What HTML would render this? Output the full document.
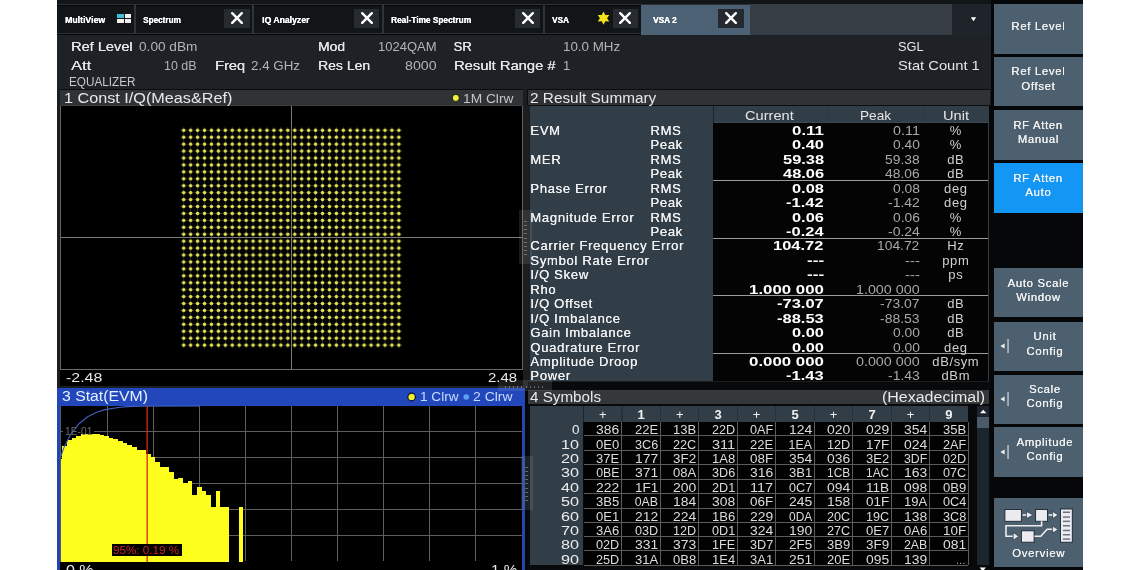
<!DOCTYPE html>
<html><head><meta charset="utf-8"><style>
html,body{margin:0;padding:0;width:1140px;height:570px;overflow:hidden;background:#fff;position:relative}
div,span,svg{position:absolute;box-sizing:border-box}
span{font-family:"Liberation Sans", sans-serif;white-space:pre;transform-origin:0 0}
</style></head><body>
<div style="left:57px;top:0px;width:1026px;height:570px;background:#060708;"></div>
<div style="left:57px;top:0px;width:934px;height:4px;background:#131619;"></div>
<div style="left:57px;top:4.3px;width:934px;height:1.2px;background:#2b3137;"></div>
<div style="left:57px;top:5.5px;width:934px;height:27.7px;background:#121518;"></div>
<div style="left:57px;top:33.2px;width:934px;height:1.2px;background:#2b3137;"></div>
<div style="left:134px;top:5px;width:1.6px;height:28.5px;background:#2e343a;"></div>
<div style="left:252px;top:5px;width:1.6px;height:28.5px;background:#2e343a;"></div>
<div style="left:382px;top:5px;width:1.6px;height:28.5px;background:#2e343a;"></div>
<div style="left:543px;top:5px;width:1.6px;height:28.5px;background:#2e343a;"></div>
<div style="left:641px;top:4.5px;width:109px;height:30.0px;background:#4c6173;"></div>
<div style="left:750px;top:4px;width:202px;height:31px;background:#363d44;"></div>
<div style="left:952px;top:4px;width:39px;height:31px;background:#1f242a;"></div>
<div style="left:991px;top:0px;width:3px;height:570px;background:#050607;"></div>
<div style="left:224px;top:8.5px;width:26px;height:19.5px;background:#262b30;"></div>
<svg style="left:231.0px;top:12.3px" width="12" height="12"><path d="M1.2 1.2L10.8 10.8M10.8 1.2L1.2 10.8" stroke="#fff" stroke-width="2.4" stroke-linecap="round"/></svg>
<div style="left:354px;top:8.5px;width:25px;height:19.5px;background:#262b30;"></div>
<svg style="left:360.5px;top:12.3px" width="12" height="12"><path d="M1.2 1.2L10.8 10.8M10.8 1.2L1.2 10.8" stroke="#fff" stroke-width="2.4" stroke-linecap="round"/></svg>
<div style="left:515px;top:8.5px;width:25px;height:19.5px;background:#262b30;"></div>
<svg style="left:521.5px;top:12.3px" width="12" height="12"><path d="M1.2 1.2L10.8 10.8M10.8 1.2L1.2 10.8" stroke="#fff" stroke-width="2.4" stroke-linecap="round"/></svg>
<div style="left:612.5px;top:8.5px;width:25.5px;height:19.5px;background:#262b30;"></div>
<svg style="left:619.25px;top:12.3px" width="12" height="12"><path d="M1.2 1.2L10.8 10.8M10.8 1.2L1.2 10.8" stroke="#fff" stroke-width="2.4" stroke-linecap="round"/></svg>
<div style="left:718px;top:8.5px;width:26px;height:19.5px;background:#242a30;"></div>
<svg style="left:725.0px;top:12.3px" width="12" height="12"><path d="M1.2 1.2L10.8 10.8M10.8 1.2L1.2 10.8" stroke="#fff" stroke-width="2.4" stroke-linecap="round"/></svg>
<div style="left:117px;top:13.5px;width:6.6px;height:4.7px;background:#3cc0d4;"></div>
<div style="left:124.6px;top:13.5px;width:6.7px;height:4.7px;background:#f0f0f0;"></div>
<div style="left:117px;top:19.2px;width:6.6px;height:4.0px;background:#f4f0f0;"></div>
<div style="left:124.6px;top:19.2px;width:6.7px;height:4.0px;background:#eef0ee;"></div>
<svg style="left:590px;top:4px" width="30" height="30"><polygon points="13.50,7.60 15.30,11.08 19.22,10.90 17.10,14.20 19.22,17.50 15.30,17.32 13.50,20.80 11.70,17.32 7.78,17.50 9.90,14.20 7.78,10.90 11.70,11.08" fill="#f2e21a"/></svg>
<svg style="left:968.9px;top:15px" width="10" height="8"><path d="M1.8 2.2L7.2 2.2L4.5 6.2Z" fill="#fff"/></svg>
<div style="left:57px;top:34.5px;width:934px;height:54.5px;background:#1e2227;"></div>
<div style="left:57px;top:89px;width:470.5px;height:299px;background:#1b1e21;"></div>
<div style="left:60px;top:90px;width:462.6px;height:16.3px;background:#303336;"></div>
<div style="left:59.5px;top:89px;width:463.1px;height:1px;background:#0b0c0d;"></div>
<div style="left:60px;top:105.3px;width:462.6px;height:1.0px;background:#3a3d40;"></div>
<div style="left:60px;top:106px;width:462.5px;height:280px;background:#000;"></div>
<div style="left:60px;top:106.3px;width:1px;height:263.7px;background:#606060;"></div>
<div style="left:522px;top:106.3px;width:1px;height:263.7px;background:#606060;"></div>
<div style="left:60px;top:369px;width:463px;height:1px;background:#6a6a6a;"></div>
<div style="left:291px;top:106.3px;width:1px;height:262.7px;background:#7a7a7a;"></div>
<div style="left:61px;top:237px;width:461px;height:1px;background:#7a7a7a;"></div>
<svg style="left:450px;top:92px" width="12" height="12"><circle cx="5.8" cy="5.9" r="3.6" fill="#f0f040" stroke="#111" stroke-width="1"/></svg>
<div style="left:527.5px;top:89px;width:463.5px;height:299px;background:#1b1e21;"></div>
<div style="left:988.6px;top:104.5px;width:5.4px;height:283.5px;background:#060708;"></div>
<div style="left:527.5px;top:104.5px;width:461.1px;height:1.8px;background:#0c0e10;"></div>
<div style="left:527.8px;top:90px;width:462.2px;height:14.5px;background:#303336;"></div>
<div style="left:527.3px;top:89px;width:462.7px;height:1px;background:#0b0c0d;"></div>
<div style="left:527.3px;top:89px;width:0.9px;height:15.5px;background:#0b0c0d;"></div>
<div style="left:529.5px;top:106.3px;width:459.1px;height:275.2px;background:#313e48;"></div>
<div style="left:712.6px;top:122.4px;width:275.9px;height:259.1px;background:#040404;"></div>
<svg style="left:0;top:0" width="1140" height="570"><defs><pattern id="cst" patternUnits="userSpaceOnUse" x="180.230" y="126.835" width="6.94" height="6.93"><path d="M0.47 3.46H6.47M3.47 0.46V6.46" stroke="#4a4a30" stroke-width="0.8"/><circle cx="3.470" cy="3.465" r="1.75" fill="#e4e454"/></pattern></defs><rect x="180.230" y="126.835" width="222.080" height="221.760" fill="url(#cst)"/></svg>
<div style="left:712.5px;top:106.3px;width:276.0px;height:16.3px;background:#313e48;"></div>
<div style="left:712.5px;top:106.3px;width:1.0px;height:16.3px;background:#1c242a;"></div>
<div style="left:713.5px;top:121.6px;width:275.0px;height:1.0px;background:#3c4955;"></div>
<div style="left:827.2px;top:106.6px;width:1.2px;height:15.8px;background:#2c3740;"></div>
<div style="left:923.2px;top:106.6px;width:1.2px;height:15.8px;background:#2c3740;"></div>
<div style="left:712.6px;top:180px;width:275.4px;height:1px;background:#9a9a9a;"></div>
<div style="left:712.6px;top:238px;width:275.4px;height:1px;background:#9a9a9a;"></div>
<div style="left:712.6px;top:295px;width:275.4px;height:1px;background:#9a9a9a;"></div>
<div style="left:712.6px;top:353px;width:275.4px;height:1px;background:#9a9a9a;"></div>
<div style="left:57px;top:388px;width:468px;height:182px;background:#2445ae;"></div>
<div style="left:525px;top:388px;width:2.7px;height:182px;background:#050607;"></div>
<div style="left:57px;top:388px;width:467.3px;height:17.7px;background:#2147ba;"></div>
<div style="left:60.3px;top:405.7px;width:461.6px;height:164.3px;background:#000;"></div>
<div style="left:60px;top:405.7px;width:1px;height:156.3px;background:#505a70;"></div>
<div style="left:107px;top:405.7px;width:1px;height:155.3px;background:#5e5e5e;"></div>
<div style="left:153px;top:405.7px;width:1px;height:155.3px;background:#5e5e5e;"></div>
<div style="left:199px;top:405.7px;width:1px;height:155.3px;background:#5e5e5e;"></div>
<div style="left:245px;top:405.7px;width:1px;height:155.3px;background:#5e5e5e;"></div>
<div style="left:291px;top:405.7px;width:1px;height:155.3px;background:#5e5e5e;"></div>
<div style="left:337px;top:405.7px;width:1px;height:155.3px;background:#5e5e5e;"></div>
<div style="left:383px;top:405.7px;width:1px;height:155.3px;background:#5e5e5e;"></div>
<div style="left:429px;top:405.7px;width:1px;height:155.3px;background:#5e5e5e;"></div>
<div style="left:475px;top:405.7px;width:1px;height:155.3px;background:#5e5e5e;"></div>
<div style="left:61px;top:431px;width:460.9px;height:1px;background:#5e5e5e;"></div>
<div style="left:61px;top:457px;width:460.9px;height:1px;background:#5e5e5e;"></div>
<div style="left:61px;top:483px;width:460.9px;height:1px;background:#5e5e5e;"></div>
<div style="left:61px;top:509px;width:460.9px;height:1px;background:#5e5e5e;"></div>
<div style="left:61px;top:535px;width:460.9px;height:1px;background:#5e5e5e;"></div>
<svg style="left:400px;top:390px" width="20" height="16"><circle cx="11.6" cy="7" r="3.8" fill="#f0f030" stroke="#0a1030" stroke-width="1.2"/></svg>
<svg style="left:460px;top:390px" width="12" height="16"><circle cx="6.2" cy="7" r="2.8" fill="#5aa2f0"/></svg>
<div style="left:63px;top:427px;width:31px;height:9px;background:#000;"></div>
<svg style="left:0;top:0" width="1140" height="570" shape-rendering="crispEdges"><g fill="#ffff1e"><rect x="61" y="459" width="1" height="103"/><rect x="62" y="446" width="5" height="116"/><rect x="67" y="440" width="5" height="122"/><rect x="72" y="438" width="4" height="124"/><rect x="76" y="436" width="5" height="126"/><rect x="81" y="434" width="5" height="128"/><rect x="86" y="434" width="4" height="128"/><rect x="90" y="434" width="5" height="128"/><rect x="95" y="434" width="5" height="128"/><rect x="100" y="435" width="4" height="127"/><rect x="104" y="436" width="5" height="126"/><rect x="109" y="438" width="4" height="124"/><rect x="113" y="439" width="5" height="123"/><rect x="118" y="441" width="5" height="121"/><rect x="123" y="443" width="4" height="119"/><rect x="127" y="445" width="5" height="117"/><rect x="132" y="447" width="5" height="115"/><rect x="137" y="450" width="4" height="112"/><rect x="141" y="450" width="5" height="112"/><rect x="146" y="454" width="5" height="108"/><rect x="151" y="457" width="4" height="105"/><rect x="155" y="462" width="5" height="100"/><rect x="160" y="467" width="4" height="95"/><rect x="164" y="467" width="5" height="95"/><rect x="169" y="472" width="5" height="90"/><rect x="174" y="479" width="4" height="83"/><rect x="178" y="478" width="5" height="84"/><rect x="183" y="483" width="5" height="79"/><rect x="188" y="481" width="4" height="81"/><rect x="192" y="495" width="5" height="67"/><rect x="197" y="487" width="5" height="75"/><rect x="202" y="491" width="4" height="71"/><rect x="206" y="495" width="5" height="67"/><rect x="211" y="507" width="5" height="55"/><rect x="216" y="491" width="4" height="71"/><rect x="220" y="507" width="5" height="55"/><rect x="225" y="507" width="4" height="55"/><rect x="239" y="507" width="4" height="55"/></g></svg>
<svg style="left:0;top:0" width="1140" height="570"><polyline points="61,456 64,447.4 70.2,435.1 79,423.7 87.7,416.7 96.5,412.3 105.2,409.6 118.4,407.5 127.2,406.6 140,406.2 200,405.9" fill="none" stroke="#4060c0" stroke-width="1.1" stroke-linejoin="round"/><rect x="146.5" y="405.7" width="1.3" height="156.3" fill="#d42a10"/></svg>
<div style="left:112px;top:543.7px;width:70px;height:12.3px;background:#000;"></div>
<div style="left:527.5px;top:381.5px;width:463.5px;height:188.5px;background:#08090a;"></div>
<div style="left:527.7px;top:389.5px;width:461.3px;height:14.3px;background:#35383b;"></div>
<div style="left:530.2px;top:405.5px;width:53.3px;height:159.5px;background:#313e48;"></div>
<div style="left:583.5px;top:405.5px;width:384.7px;height:16.1px;background:#313e48;"></div>
<div style="left:582.8px;top:405.5px;width:1.0px;height:16.1px;background:#1c242a;"></div>
<div style="left:583.5px;top:421.5px;width:384.7px;height:143.5px;background:#020202;"></div>
<div style="left:621.37px;top:405.9px;width:1.2px;height:15.6px;background:#283038;"></div>
<div style="left:659.84px;top:405.9px;width:1.2px;height:15.6px;background:#283038;"></div>
<div style="left:698.31px;top:405.9px;width:1.2px;height:15.6px;background:#283038;"></div>
<div style="left:736.78px;top:405.9px;width:1.2px;height:15.6px;background:#283038;"></div>
<div style="left:775.25px;top:405.9px;width:1.2px;height:15.6px;background:#283038;"></div>
<div style="left:813.7199999999999px;top:405.9px;width:1.2px;height:15.6px;background:#283038;"></div>
<div style="left:852.1899999999999px;top:405.9px;width:1.2px;height:15.6px;background:#283038;"></div>
<div style="left:890.66px;top:405.9px;width:1.2px;height:15.6px;background:#283038;"></div>
<div style="left:929.13px;top:405.9px;width:1.2px;height:15.6px;background:#283038;"></div>
<div style="left:583.5px;top:435px;width:384.7px;height:1px;background:#5c5c5c;"></div>
<div style="left:583.5px;top:450px;width:384.7px;height:1px;background:#5c5c5c;"></div>
<div style="left:583.5px;top:464px;width:384.7px;height:1px;background:#5c5c5c;"></div>
<div style="left:583.5px;top:479px;width:384.7px;height:1px;background:#5c5c5c;"></div>
<div style="left:583.5px;top:493px;width:384.7px;height:1px;background:#5c5c5c;"></div>
<div style="left:583.5px;top:508px;width:384.7px;height:1px;background:#5c5c5c;"></div>
<div style="left:583.5px;top:522px;width:384.7px;height:1px;background:#5c5c5c;"></div>
<div style="left:583.5px;top:536px;width:384.7px;height:1px;background:#5c5c5c;"></div>
<div style="left:583.5px;top:550px;width:384.7px;height:1px;background:#5c5c5c;"></div>
<div style="left:583.5px;top:565px;width:384.7px;height:1px;background:#5c5c5c;"></div>
<div style="left:621px;top:421.5px;width:1px;height:143.5px;background:#5c5c5c;"></div>
<div style="left:660px;top:421.5px;width:1px;height:143.5px;background:#5c5c5c;"></div>
<div style="left:698px;top:421.5px;width:1px;height:143.5px;background:#5c5c5c;"></div>
<div style="left:737px;top:421.5px;width:1px;height:143.5px;background:#5c5c5c;"></div>
<div style="left:775px;top:421.5px;width:1px;height:143.5px;background:#5c5c5c;"></div>
<div style="left:814px;top:421.5px;width:1px;height:143.5px;background:#5c5c5c;"></div>
<div style="left:852px;top:421.5px;width:1px;height:143.5px;background:#5c5c5c;"></div>
<div style="left:891px;top:421.5px;width:1px;height:143.5px;background:#5c5c5c;"></div>
<div style="left:929px;top:421.5px;width:1px;height:143.5px;background:#5c5c5c;"></div>
<div style="left:968px;top:421.5px;width:1px;height:143.5px;background:#5c5c5c;"></div>
<div style="left:977.2px;top:405.5px;width:11.6px;height:159.5px;background:#1c252d;"></div>
<div style="left:977.2px;top:416.5px;width:11.6px;height:11.2px;background:#4a5a68;"></div>
<svg style="left:977px;top:407px" width="12" height="8"><path d="M3 6.2L9.4 6.2L6.2 2.8Z" fill="#fff"/></svg>
<svg style="left:977px;top:564.5px" width="12" height="8"><path d="M2.5 2.5L9 2.5L5.75 6Z" fill="#fff"/></svg>
<div style="left:994px;top:4px;width:89px;height:49.5px;background:#4d6070;"></div>
<div style="left:994px;top:57px;width:89px;height:49px;background:#4d6070;"></div>
<div style="left:994px;top:109.6px;width:89px;height:50.4px;background:#4d6070;"></div>
<div style="left:994px;top:163px;width:89px;height:49.5px;background:#1496f4;"></div>
<div style="left:994px;top:268.4px;width:89px;height:49.1px;background:#4d6070;"></div>
<div style="left:994px;top:321.7px;width:89px;height:49.1px;background:#4d6070;"></div>
<svg style="left:998px;top:339.2px" width="14" height="14"><path d="M2.4 7L6.6 4.4V9.6Z" fill="#f0f0f0"/><rect x="9.4" y="0" width="1.3" height="14" fill="#c8d0d8"/></svg>
<div style="left:994px;top:374.5px;width:89px;height:49.1px;background:#4d6070;"></div>
<svg style="left:998px;top:392.1px" width="14" height="14"><path d="M2.4 7L6.6 4.4V9.6Z" fill="#f0f0f0"/><rect x="9.4" y="0" width="1.3" height="14" fill="#c8d0d8"/></svg>
<div style="left:994px;top:427.4px;width:89px;height:49.2px;background:#4d6070;"></div>
<svg style="left:998px;top:445.0px" width="14" height="14"><path d="M2.4 7L6.6 4.4V9.6Z" fill="#f0f0f0"/><rect x="9.4" y="0" width="1.3" height="14" fill="#c8d0d8"/></svg>
<div style="left:994px;top:497.6px;width:89px;height:69.4px;background:#4d6070;"></div>
<svg style="left:994px;top:497px" width="89" height="70"><g fill="#ececf0" stroke="#1a2430" stroke-width="0.9"><rect x="10.9" y="12.5" width="16.5" height="11.8"/><rect x="41.6" y="12.5" width="11.9" height="11.8"/><rect x="27.4" y="33.8" width="12.7" height="11.4"/><rect x="66.5" y="12" width="11.8" height="33.2"/></g><g fill="none" stroke="#ececf0" stroke-width="1.6"><path d="M28.6 18H33"/><path d="M54.7 18H59"/><path d="M47.6 24.3V28.7H12V39.3H19.5"/><path d="M40.5 39.3H46.8L53.1 32.2H58.6"/></g><g fill="#ececf0" stroke="#1a2430" stroke-width="0.6"><path d="M32.6 14.4L38.9 18L32.6 21.6Z"/><path d="M58.6 14.4L64.1 18L58.6 21.6Z"/><path d="M19.2 35.4L24.7 39.3L19.2 43.3Z"/><path d="M58.6 29L64.1 32.6L58.6 36.1Z"/></g><g fill="#6a7480"><rect x="68.9" y="14.5" width="7.1" height="1.5"/><rect x="68.9" y="19.3" width="7.1" height="1.5"/><rect x="68.9" y="23.6" width="7.1" height="1.5"/><rect x="68.9" y="28.0" width="7.1" height="1.5"/><rect x="68.9" y="32.7" width="7.1" height="1.5"/><rect x="68.9" y="37.0" width="7.1" height="1.5"/><rect x="68.9" y="41.3" width="7.1" height="1.5"/></g></svg>
<div style="left:519.3px;top:209.9px;width:13.1px;height:54.6px;background:rgba(200,200,200,0.13);"></div>
<div style="left:524.3499999999999px;top:220.9px;width:3.0px;height:1.0px;background:rgba(190,190,190,0.45);"></div>
<div style="left:524.3499999999999px;top:225.05px;width:3.0px;height:1.0px;background:rgba(190,190,190,0.45);"></div>
<div style="left:524.3499999999999px;top:229.20000000000002px;width:3.0px;height:1.0px;background:rgba(190,190,190,0.45);"></div>
<div style="left:524.3499999999999px;top:233.35000000000002px;width:3.0px;height:1.0px;background:rgba(190,190,190,0.45);"></div>
<div style="left:524.3499999999999px;top:237.50000000000003px;width:3.0px;height:1.0px;background:rgba(190,190,190,0.45);"></div>
<div style="left:524.3499999999999px;top:241.65000000000003px;width:3.0px;height:1.0px;background:rgba(190,190,190,0.45);"></div>
<div style="left:524.3499999999999px;top:245.80000000000004px;width:3.0px;height:1.0px;background:rgba(190,190,190,0.45);"></div>
<div style="left:524.3499999999999px;top:249.95000000000005px;width:3.0px;height:1.0px;background:rgba(190,190,190,0.45);"></div>
<div style="left:524.3499999999999px;top:254.10000000000005px;width:3.0px;height:1.0px;background:rgba(190,190,190,0.45);"></div>
<div style="left:520.8px;top:455.8px;width:12.2px;height:54.7px;background:rgba(200,200,200,0.13);"></div>
<div style="left:525.4px;top:466.8px;width:3.0px;height:1.0px;background:rgba(190,190,190,0.45);"></div>
<div style="left:525.4px;top:470.95px;width:3.0px;height:1.0px;background:rgba(190,190,190,0.45);"></div>
<div style="left:525.4px;top:475.09999999999997px;width:3.0px;height:1.0px;background:rgba(190,190,190,0.45);"></div>
<div style="left:525.4px;top:479.24999999999994px;width:3.0px;height:1.0px;background:rgba(190,190,190,0.45);"></div>
<div style="left:525.4px;top:483.3999999999999px;width:3.0px;height:1.0px;background:rgba(190,190,190,0.45);"></div>
<div style="left:525.4px;top:487.5499999999999px;width:3.0px;height:1.0px;background:rgba(190,190,190,0.45);"></div>
<div style="left:525.4px;top:491.6999999999999px;width:3.0px;height:1.0px;background:rgba(190,190,190,0.45);"></div>
<div style="left:525.4px;top:495.84999999999985px;width:3.0px;height:1.0px;background:rgba(190,190,190,0.45);"></div>
<div style="left:525.4px;top:499.99999999999983px;width:3.0px;height:1.0px;background:rgba(190,190,190,0.45);"></div>
<div style="left:498px;top:380.1px;width:54.3px;height:10.5px;background:rgba(200,200,200,0.13);"></div>
<div style="left:505px;top:385.85px;width:1px;height:2.0px;background:rgba(190,190,190,0.45);"></div>
<div style="left:509.1px;top:385.85px;width:1.0px;height:2.0px;background:rgba(190,190,190,0.45);"></div>
<div style="left:513.2px;top:385.85px;width:1.0px;height:2.0px;background:rgba(190,190,190,0.45);"></div>
<div style="left:517.3000000000001px;top:385.85px;width:1.0px;height:2.0px;background:rgba(190,190,190,0.45);"></div>
<div style="left:521.4000000000001px;top:385.85px;width:1.0px;height:2.0px;background:rgba(190,190,190,0.45);"></div>
<div style="left:525.5000000000001px;top:385.85px;width:1.0px;height:2.0px;background:rgba(190,190,190,0.45);"></div>
<div style="left:529.6000000000001px;top:385.85px;width:1.0px;height:2.0px;background:rgba(190,190,190,0.45);"></div>
<div style="left:533.7000000000002px;top:385.85px;width:1.0px;height:2.0px;background:rgba(190,190,190,0.45);"></div>
<div style="left:537.8000000000002px;top:385.85px;width:1.0px;height:2.0px;background:rgba(190,190,190,0.45);"></div>
<div style="left:541.9000000000002px;top:385.85px;width:1.0px;height:2.0px;background:rgba(190,190,190,0.45);"></div>
<div style="left:0;top:0;width:1140px;height:570px;will-change:transform">
<span style="left:65.00px;top:15.80px;font-size:8.5px;line-height:8.5px;font-weight:bold;color:#ffffff;transform:scaleX(1.0245);text-shadow:0.25px 0 0 #fff;">MultiView</span>
<span style="left:143.00px;top:15.80px;font-size:8.5px;line-height:8.5px;font-weight:bold;color:#ffffff;transform:scaleX(0.9642);text-shadow:0.25px 0 0 #fff;">Spectrum</span>
<span style="left:262.00px;top:15.80px;font-size:8.5px;line-height:8.5px;font-weight:bold;color:#ffffff;transform:scaleX(1.0200);text-shadow:0.25px 0 0 #fff;">IQ Analyzer</span>
<span style="left:390.50px;top:15.80px;font-size:8.5px;line-height:8.5px;font-weight:bold;color:#ffffff;transform:scaleX(0.9752);text-shadow:0.25px 0 0 #fff;">Real-Time Spectrum</span>
<span style="left:552.00px;top:15.80px;font-size:8.5px;line-height:8.5px;font-weight:bold;color:#ffffff;transform:scaleX(0.9612);text-shadow:0.25px 0 0 #fff;">VSA</span>
<span style="left:653.00px;top:15.80px;font-size:8.5px;line-height:8.5px;font-weight:bold;color:#ffffff;transform:scaleX(0.9770);text-shadow:0.25px 0 0 #fff;">VSA 2</span>
<span style="left:70.50px;top:40.00px;font-size:13px;line-height:13px;font-weight:normal;color:#e6e6e6;transform:scaleX(1.1198);text-shadow:0.2px 0 0 currentColor;">Ref Level</span>
<span style="left:138.60px;top:40.00px;font-size:13px;line-height:13px;font-weight:normal;color:#b4b4b4;transform:scaleX(1.0495);">0.00 dBm</span>
<span style="left:70.50px;top:59.00px;font-size:13px;line-height:13px;font-weight:normal;color:#e6e6e6;transform:scaleX(1.2583);text-shadow:0.2px 0 0 currentColor;">Att</span>
<span style="left:164.40px;top:59.00px;font-size:13px;line-height:13px;font-weight:normal;color:#b4b4b4;transform:scaleX(0.9596);">10 dB</span>
<span style="left:215.00px;top:59.00px;font-size:13px;line-height:13px;font-weight:normal;color:#e6e6e6;transform:scaleX(1.1223);text-shadow:0.2px 0 0 currentColor;">Freq</span>
<span style="left:251.00px;top:59.00px;font-size:13px;line-height:13px;font-weight:normal;color:#b4b4b4;transform:scaleX(1.0276);">2.4 GHz</span>
<span style="left:317.50px;top:40.00px;font-size:13px;line-height:13px;font-weight:normal;color:#e6e6e6;transform:scaleX(1.0677);text-shadow:0.2px 0 0 currentColor;">Mod</span>
<span style="left:378.00px;top:40.00px;font-size:13px;line-height:13px;font-weight:normal;color:#b4b4b4;">1024QAM</span>
<span style="left:317.50px;top:59.00px;font-size:13px;line-height:13px;font-weight:normal;color:#e6e6e6;transform:scaleX(1.0739);text-shadow:0.2px 0 0 currentColor;">Res Len</span>
<span style="left:405.00px;top:59.00px;font-size:13px;line-height:13px;font-weight:normal;color:#b4b4b4;transform:scaleX(1.0927);">8000</span>
<span style="left:453.60px;top:40.00px;font-size:13px;line-height:13px;font-weight:normal;color:#e6e6e6;text-shadow:0.2px 0 0 currentColor;">SR</span>
<span style="left:562.50px;top:40.00px;font-size:13px;line-height:13px;font-weight:normal;color:#b4b4b4;transform:scaleX(1.0282);">10.0 MHz</span>
<span style="left:453.60px;top:59.00px;font-size:13px;line-height:13px;font-weight:normal;color:#e6e6e6;transform:scaleX(1.1316);text-shadow:0.2px 0 0 currentColor;">Result Range #</span>
<span style="left:563.00px;top:59.00px;font-size:13px;line-height:13px;font-weight:normal;color:#b4b4b4;">1</span>
<span style="left:898.00px;top:40.00px;font-size:13px;line-height:13px;font-weight:normal;color:#e6e6e6;transform:scaleX(0.9803);">SGL</span>
<span style="left:898.00px;top:59.00px;font-size:13px;line-height:13px;font-weight:normal;color:#e6e6e6;transform:scaleX(1.1319);">Stat Count 1</span>
<span style="left:68.50px;top:76.34px;font-size:12px;line-height:12px;font-weight:normal;color:#c8c8c8;transform:scaleX(0.9792);">EQUALIZER</span>
<span style="left:63.70px;top:90.95px;font-size:14px;line-height:14px;font-weight:normal;color:#e8e8e8;transform:scaleX(1.1568);">1 Const I/Q(Meas&amp;Ref)</span>
<span style="left:463.00px;top:91.80px;font-size:13px;line-height:13px;font-weight:normal;color:#c4c4c4;transform:scaleX(1.0574);">1M Clrw</span>
<span style="left:66.30px;top:370.60px;font-size:13px;line-height:13px;font-weight:normal;color:#e8e8e8;transform:scaleX(1.2251);">-2.48</span>
<span style="left:488.00px;top:370.60px;font-size:13px;line-height:13px;font-weight:normal;color:#e8e8e8;transform:scaleX(1.1462);">2.48</span>
<span style="left:530.30px;top:90.65px;font-size:14px;line-height:14px;font-weight:normal;color:#e8e8e8;transform:scaleX(1.0969);">2 Result Summary</span>
<span style="left:745.35px;top:108.70px;font-size:13px;line-height:13px;font-weight:normal;color:#e6e6e6;transform:scaleX(1.1235);">Current</span>
<span style="left:859.50px;top:108.70px;font-size:13px;line-height:13px;font-weight:normal;color:#e6e6e6;transform:scaleX(1.0462);">Peak</span>
<span style="left:942.80px;top:108.70px;font-size:13px;line-height:13px;font-weight:normal;color:#e6e6e6;transform:scaleX(1.1247);">Unit</span>
<span style="left:530.30px;top:123.80px;font-size:13px;line-height:13px;font-weight:normal;color:#f0f0f0;letter-spacing:0.72px;text-shadow:0.2px 0 0 currentColor;">EVM</span>
<span style="left:650.40px;top:123.80px;font-size:13px;line-height:13px;font-weight:normal;color:#f0f0f0;letter-spacing:0.7px;text-shadow:0.2px 0 0 currentColor;">RMS</span>
<span style="left:791.80px;top:123.80px;font-size:13px;line-height:13px;font-weight:bold;color:#ffffff;transform:scaleX(1.2976);">0.11</span>
<span style="left:892.80px;top:123.80px;font-size:13px;line-height:13px;font-weight:normal;color:#a8a8a8;transform:scaleX(1.1053);">0.11</span>
<span style="left:949.72px;top:123.80px;font-size:13px;line-height:13px;font-weight:normal;color:#d0d0d0;letter-spacing:0.6px;">%</span>
<span style="left:650.40px;top:138.25px;font-size:13px;line-height:13px;font-weight:normal;color:#f0f0f0;letter-spacing:0.7px;text-shadow:0.2px 0 0 currentColor;">Peak</span>
<span style="left:791.80px;top:138.25px;font-size:13px;line-height:13px;font-weight:bold;color:#ffffff;transform:scaleX(1.2608);">0.40</span>
<span style="left:892.80px;top:138.25px;font-size:13px;line-height:13px;font-weight:normal;color:#a8a8a8;transform:scaleX(1.0632);">0.40</span>
<span style="left:949.72px;top:138.25px;font-size:13px;line-height:13px;font-weight:normal;color:#d0d0d0;letter-spacing:0.6px;">%</span>
<span style="left:530.30px;top:152.70px;font-size:13px;line-height:13px;font-weight:normal;color:#f0f0f0;letter-spacing:0.72px;text-shadow:0.2px 0 0 currentColor;">MER</span>
<span style="left:650.40px;top:152.70px;font-size:13px;line-height:13px;font-weight:normal;color:#f0f0f0;letter-spacing:0.7px;text-shadow:0.2px 0 0 currentColor;">RMS</span>
<span style="left:782.60px;top:152.70px;font-size:13px;line-height:13px;font-weight:bold;color:#ffffff;transform:scaleX(1.2634);">59.38</span>
<span style="left:885.10px;top:152.70px;font-size:13px;line-height:13px;font-weight:normal;color:#a8a8a8;transform:scaleX(1.0636);">59.38</span>
<span style="left:947.25px;top:152.70px;font-size:13px;line-height:13px;font-weight:normal;color:#d0d0d0;letter-spacing:0.6px;">dB</span>
<span style="left:650.40px;top:167.15px;font-size:13px;line-height:13px;font-weight:normal;color:#f0f0f0;letter-spacing:0.7px;text-shadow:0.2px 0 0 currentColor;">Peak</span>
<span style="left:782.60px;top:167.15px;font-size:13px;line-height:13px;font-weight:bold;color:#ffffff;transform:scaleX(1.2634);">48.06</span>
<span style="left:885.10px;top:167.15px;font-size:13px;line-height:13px;font-weight:normal;color:#a8a8a8;transform:scaleX(1.0636);">48.06</span>
<span style="left:947.25px;top:167.15px;font-size:13px;line-height:13px;font-weight:normal;color:#d0d0d0;letter-spacing:0.6px;">dB</span>
<span style="left:530.30px;top:181.60px;font-size:13px;line-height:13px;font-weight:normal;color:#f0f0f0;letter-spacing:0.72px;text-shadow:0.2px 0 0 currentColor;">Phase Error</span>
<span style="left:650.40px;top:181.60px;font-size:13px;line-height:13px;font-weight:normal;color:#f0f0f0;letter-spacing:0.7px;text-shadow:0.2px 0 0 currentColor;">RMS</span>
<span style="left:791.80px;top:181.60px;font-size:13px;line-height:13px;font-weight:bold;color:#ffffff;transform:scaleX(1.2608);">0.08</span>
<span style="left:892.80px;top:181.60px;font-size:13px;line-height:13px;font-weight:normal;color:#a8a8a8;transform:scaleX(1.0632);">0.08</span>
<span style="left:944.06px;top:181.60px;font-size:13px;line-height:13px;font-weight:normal;color:#d0d0d0;letter-spacing:0.6px;">deg</span>
<span style="left:650.40px;top:196.05px;font-size:13px;line-height:13px;font-weight:normal;color:#f0f0f0;letter-spacing:0.7px;text-shadow:0.2px 0 0 currentColor;">Peak</span>
<span style="left:786.10px;top:196.05px;font-size:13px;line-height:13px;font-weight:bold;color:#ffffff;transform:scaleX(1.2689);">-1.42</span>
<span style="left:887.80px;top:196.05px;font-size:13px;line-height:13px;font-weight:normal;color:#a8a8a8;transform:scaleX(1.0766);">-1.42</span>
<span style="left:944.06px;top:196.05px;font-size:13px;line-height:13px;font-weight:normal;color:#d0d0d0;letter-spacing:0.6px;">deg</span>
<span style="left:530.30px;top:210.50px;font-size:13px;line-height:13px;font-weight:normal;color:#f0f0f0;letter-spacing:0.72px;text-shadow:0.2px 0 0 currentColor;">Magnitude Error</span>
<span style="left:650.40px;top:210.50px;font-size:13px;line-height:13px;font-weight:normal;color:#f0f0f0;letter-spacing:0.7px;text-shadow:0.2px 0 0 currentColor;">RMS</span>
<span style="left:791.80px;top:210.50px;font-size:13px;line-height:13px;font-weight:bold;color:#ffffff;transform:scaleX(1.2608);">0.06</span>
<span style="left:892.80px;top:210.50px;font-size:13px;line-height:13px;font-weight:normal;color:#a8a8a8;transform:scaleX(1.0632);">0.06</span>
<span style="left:949.72px;top:210.50px;font-size:13px;line-height:13px;font-weight:normal;color:#d0d0d0;letter-spacing:0.6px;">%</span>
<span style="left:650.40px;top:224.95px;font-size:13px;line-height:13px;font-weight:normal;color:#f0f0f0;letter-spacing:0.7px;text-shadow:0.2px 0 0 currentColor;">Peak</span>
<span style="left:786.10px;top:224.95px;font-size:13px;line-height:13px;font-weight:bold;color:#ffffff;transform:scaleX(1.2689);">-0.24</span>
<span style="left:887.80px;top:224.95px;font-size:13px;line-height:13px;font-weight:normal;color:#a8a8a8;transform:scaleX(1.0766);">-0.24</span>
<span style="left:949.72px;top:224.95px;font-size:13px;line-height:13px;font-weight:normal;color:#d0d0d0;letter-spacing:0.6px;">%</span>
<span style="left:530.30px;top:239.40px;font-size:13px;line-height:13px;font-weight:normal;color:#f0f0f0;letter-spacing:0.72px;text-shadow:0.2px 0 0 currentColor;">Carrier Frequency Error</span>
<span style="left:773.40px;top:239.40px;font-size:13px;line-height:13px;font-weight:bold;color:#ffffff;transform:scaleX(1.2650);">104.72</span>
<span style="left:877.40px;top:239.40px;font-size:13px;line-height:13px;font-weight:normal;color:#a8a8a8;transform:scaleX(1.0638);">104.72</span>
<span style="left:947.26px;top:239.40px;font-size:13px;line-height:13px;font-weight:normal;color:#d0d0d0;letter-spacing:0.6px;">Hz</span>
<span style="left:530.30px;top:253.85px;font-size:13px;line-height:13px;font-weight:normal;color:#f0f0f0;letter-spacing:0.72px;text-shadow:0.2px 0 0 currentColor;">Symbol Rate Error</span>
<span style="left:806.60px;top:253.85px;font-size:13px;line-height:13px;font-weight:bold;color:#ffffff;transform:scaleX(1.3167);">---</span>
<span style="left:904.70px;top:253.85px;font-size:13px;line-height:13px;font-weight:normal;color:#a8a8a8;transform:scaleX(1.1550);">---</span>
<span style="left:942.26px;top:253.85px;font-size:13px;line-height:13px;font-weight:normal;color:#d0d0d0;letter-spacing:0.6px;">ppm</span>
<span style="left:530.30px;top:268.30px;font-size:13px;line-height:13px;font-weight:normal;color:#f0f0f0;letter-spacing:0.72px;text-shadow:0.2px 0 0 currentColor;">I/Q Skew</span>
<span style="left:806.60px;top:268.30px;font-size:13px;line-height:13px;font-weight:bold;color:#ffffff;transform:scaleX(1.3167);">---</span>
<span style="left:904.70px;top:268.30px;font-size:13px;line-height:13px;font-weight:normal;color:#a8a8a8;transform:scaleX(1.1550);">---</span>
<span style="left:948.34px;top:268.30px;font-size:13px;line-height:13px;font-weight:normal;color:#d0d0d0;letter-spacing:0.6px;">ps</span>
<span style="left:530.30px;top:282.75px;font-size:13px;line-height:13px;font-weight:normal;color:#f0f0f0;letter-spacing:0.72px;text-shadow:0.2px 0 0 currentColor;">Rho</span>
<span style="left:748.70px;top:282.75px;font-size:13px;line-height:13px;font-weight:bold;color:#ffffff;transform:scaleX(1.2968);">1.000 000</span>
<span style="left:856.10px;top:282.75px;font-size:13px;line-height:13px;font-weight:normal;color:#a8a8a8;transform:scaleX(1.0997);">1.000 000</span>
<span style="left:530.30px;top:297.20px;font-size:13px;line-height:13px;font-weight:normal;color:#f0f0f0;letter-spacing:0.72px;text-shadow:0.2px 0 0 currentColor;">I/Q Offset</span>
<span style="left:776.90px;top:297.20px;font-size:13px;line-height:13px;font-weight:bold;color:#ffffff;transform:scaleX(1.2696);">-73.07</span>
<span style="left:880.10px;top:297.20px;font-size:13px;line-height:13px;font-weight:normal;color:#a8a8a8;transform:scaleX(1.0743);">-73.07</span>
<span style="left:947.25px;top:297.20px;font-size:13px;line-height:13px;font-weight:normal;color:#d0d0d0;letter-spacing:0.6px;">dB</span>
<span style="left:530.30px;top:311.65px;font-size:13px;line-height:13px;font-weight:normal;color:#f0f0f0;letter-spacing:0.72px;text-shadow:0.2px 0 0 currentColor;">I/Q Imbalance</span>
<span style="left:776.90px;top:311.65px;font-size:13px;line-height:13px;font-weight:bold;color:#ffffff;transform:scaleX(1.2696);">-88.53</span>
<span style="left:880.10px;top:311.65px;font-size:13px;line-height:13px;font-weight:normal;color:#a8a8a8;transform:scaleX(1.0743);">-88.53</span>
<span style="left:947.25px;top:311.65px;font-size:13px;line-height:13px;font-weight:normal;color:#d0d0d0;letter-spacing:0.6px;">dB</span>
<span style="left:530.30px;top:326.10px;font-size:13px;line-height:13px;font-weight:normal;color:#f0f0f0;letter-spacing:0.72px;text-shadow:0.2px 0 0 currentColor;">Gain Imbalance</span>
<span style="left:791.80px;top:326.10px;font-size:13px;line-height:13px;font-weight:bold;color:#ffffff;transform:scaleX(1.2608);">0.00</span>
<span style="left:892.80px;top:326.10px;font-size:13px;line-height:13px;font-weight:normal;color:#a8a8a8;transform:scaleX(1.0632);">0.00</span>
<span style="left:947.25px;top:326.10px;font-size:13px;line-height:13px;font-weight:normal;color:#d0d0d0;letter-spacing:0.6px;">dB</span>
<span style="left:530.30px;top:340.55px;font-size:13px;line-height:13px;font-weight:normal;color:#f0f0f0;letter-spacing:0.72px;text-shadow:0.2px 0 0 currentColor;">Quadrature Error</span>
<span style="left:791.80px;top:340.55px;font-size:13px;line-height:13px;font-weight:bold;color:#ffffff;transform:scaleX(1.2608);">0.00</span>
<span style="left:892.80px;top:340.55px;font-size:13px;line-height:13px;font-weight:normal;color:#a8a8a8;transform:scaleX(1.0632);">0.00</span>
<span style="left:944.06px;top:340.55px;font-size:13px;line-height:13px;font-weight:normal;color:#d0d0d0;letter-spacing:0.6px;">deg</span>
<span style="left:530.30px;top:355.00px;font-size:13px;line-height:13px;font-weight:normal;color:#f0f0f0;letter-spacing:0.72px;text-shadow:0.2px 0 0 currentColor;">Amplitude Droop</span>
<span style="left:748.70px;top:355.00px;font-size:13px;line-height:13px;font-weight:bold;color:#ffffff;transform:scaleX(1.2968);">0.000 000</span>
<span style="left:856.10px;top:355.00px;font-size:13px;line-height:13px;font-weight:normal;color:#a8a8a8;transform:scaleX(1.0997);">0.000 000</span>
<span style="left:932.33px;top:355.00px;font-size:13px;line-height:13px;font-weight:normal;color:#d0d0d0;letter-spacing:0.6px;">dB/sym</span>
<span style="left:530.30px;top:369.45px;font-size:13px;line-height:13px;font-weight:normal;color:#f0f0f0;letter-spacing:0.72px;text-shadow:0.2px 0 0 currentColor;">Power</span>
<span style="left:786.10px;top:369.45px;font-size:13px;line-height:13px;font-weight:bold;color:#ffffff;transform:scaleX(1.2689);">-1.43</span>
<span style="left:887.80px;top:369.45px;font-size:13px;line-height:13px;font-weight:normal;color:#a8a8a8;transform:scaleX(1.0766);">-1.43</span>
<span style="left:941.54px;top:369.45px;font-size:13px;line-height:13px;font-weight:normal;color:#d0d0d0;letter-spacing:0.6px;">dBm</span>
<span style="left:62.00px;top:389.35px;font-size:14px;line-height:14px;font-weight:normal;color:#e4f0ff;transform:scaleX(1.1280);">3 Stat(EVM)</span>
<span style="left:419.50px;top:390.20px;font-size:13px;line-height:13px;font-weight:normal;color:#c8dcff;transform:scaleX(1.0452);">1 Clrw</span>
<span style="left:473.40px;top:390.20px;font-size:13px;line-height:13px;font-weight:normal;color:#c8dcff;transform:scaleX(1.0751);">2 Clrw</span>
<span style="left:65.40px;top:426.54px;font-size:10px;line-height:10px;font-weight:normal;color:#6a6a6a;transform:scaleX(1.0268);">1E-01</span>
<span style="left:113.00px;top:544.71px;font-size:10.5px;line-height:10.5px;font-weight:normal;color:#c82424;transform:scaleX(1.1085);">95%: 0.19 %</span>
<span style="left:66.20px;top:562.65px;font-size:14px;line-height:14px;font-weight:normal;color:#e8e8e8;transform:scaleX(1.1441);">0 %</span>
<span style="left:490.90px;top:562.65px;font-size:14px;line-height:14px;font-weight:normal;color:#e8e8e8;transform:scaleX(1.0902);">1 %</span>
<span style="left:530.30px;top:389.85px;font-size:14px;line-height:14px;font-weight:normal;color:#e8e8e8;transform:scaleX(1.0863);">4 Symbols</span>
<span style="left:881.60px;top:389.85px;font-size:14px;line-height:14px;font-weight:normal;color:#e8e8e8;transform:scaleX(1.1413);">(Hexadecimal)</span>
<span style="left:598.94px;top:408.00px;font-size:13px;line-height:13px;font-weight:normal;color:#f0f0f0;">+</span>
<span style="left:637.59px;top:408.00px;font-size:13px;line-height:13px;font-weight:bold;color:#f0f0f0;">1</span>
<span style="left:675.88px;top:408.00px;font-size:13px;line-height:13px;font-weight:normal;color:#f0f0f0;">+</span>
<span style="left:714.53px;top:408.00px;font-size:13px;line-height:13px;font-weight:bold;color:#f0f0f0;">3</span>
<span style="left:752.82px;top:408.00px;font-size:13px;line-height:13px;font-weight:normal;color:#f0f0f0;">+</span>
<span style="left:791.47px;top:408.00px;font-size:13px;line-height:13px;font-weight:bold;color:#f0f0f0;">5</span>
<span style="left:829.76px;top:408.00px;font-size:13px;line-height:13px;font-weight:normal;color:#f0f0f0;">+</span>
<span style="left:868.41px;top:408.00px;font-size:13px;line-height:13px;font-weight:bold;color:#f0f0f0;">7</span>
<span style="left:906.70px;top:408.00px;font-size:13px;line-height:13px;font-weight:normal;color:#f0f0f0;">+</span>
<span style="left:945.35px;top:408.00px;font-size:13px;line-height:13px;font-weight:bold;color:#f0f0f0;">9</span>
<span style="left:571.80px;top:424.19px;font-size:12.3px;line-height:12.3px;font-weight:normal;color:#ececec;transform:scaleX(1.0967);">0</span>
<span style="left:596.27px;top:424.19px;font-size:12.3px;line-height:12.3px;font-weight:normal;color:#dcdcdc;transform:scaleX(1.1308);">386</span>
<span style="left:634.74px;top:424.19px;font-size:12.3px;line-height:12.3px;font-weight:normal;color:#dcdcdc;transform:scaleX(1.0603);">22E</span>
<span style="left:673.21px;top:424.19px;font-size:12.3px;line-height:12.3px;font-weight:normal;color:#dcdcdc;transform:scaleX(1.0603);">13B</span>
<span style="left:711.68px;top:424.19px;font-size:12.3px;line-height:12.3px;font-weight:normal;color:#dcdcdc;transform:scaleX(1.0284);">22D</span>
<span style="left:750.15px;top:424.19px;font-size:12.3px;line-height:12.3px;font-weight:normal;color:#dcdcdc;transform:scaleX(1.0287);">0AF</span>
<span style="left:788.62px;top:424.19px;font-size:12.3px;line-height:12.3px;font-weight:normal;color:#dcdcdc;transform:scaleX(1.1308);">124</span>
<span style="left:827.09px;top:424.19px;font-size:12.3px;line-height:12.3px;font-weight:normal;color:#dcdcdc;transform:scaleX(1.1308);">020</span>
<span style="left:865.56px;top:424.19px;font-size:12.3px;line-height:12.3px;font-weight:normal;color:#dcdcdc;transform:scaleX(1.1308);">029</span>
<span style="left:904.03px;top:424.19px;font-size:12.3px;line-height:12.3px;font-weight:normal;color:#dcdcdc;transform:scaleX(1.1308);">354</span>
<span style="left:942.50px;top:424.19px;font-size:12.3px;line-height:12.3px;font-weight:normal;color:#dcdcdc;transform:scaleX(1.0603);">35B</span>
<span style="left:561.30px;top:438.58px;font-size:12.3px;line-height:12.3px;font-weight:normal;color:#ececec;transform:scaleX(1.3160);">10</span>
<span style="left:596.27px;top:438.58px;font-size:12.3px;line-height:12.3px;font-weight:normal;color:#dcdcdc;transform:scaleX(1.0603);">0E0</span>
<span style="left:634.74px;top:438.58px;font-size:12.3px;line-height:12.3px;font-weight:normal;color:#dcdcdc;transform:scaleX(1.0284);">3C6</span>
<span style="left:673.21px;top:438.58px;font-size:12.3px;line-height:12.3px;font-weight:normal;color:#dcdcdc;transform:scaleX(1.0284);">22C</span>
<span style="left:711.68px;top:438.58px;font-size:12.3px;line-height:12.3px;font-weight:normal;color:#dcdcdc;transform:scaleX(1.1834);">311</span>
<span style="left:750.15px;top:438.58px;font-size:12.3px;line-height:12.3px;font-weight:normal;color:#dcdcdc;transform:scaleX(1.0603);">22E</span>
<span style="left:788.62px;top:438.58px;font-size:12.3px;line-height:12.3px;font-weight:normal;color:#dcdcdc;">1EA</span>
<span style="left:827.09px;top:438.58px;font-size:12.3px;line-height:12.3px;font-weight:normal;color:#dcdcdc;transform:scaleX(1.0284);">12D</span>
<span style="left:865.56px;top:438.58px;font-size:12.3px;line-height:12.3px;font-weight:normal;color:#dcdcdc;transform:scaleX(1.0949);">17F</span>
<span style="left:904.03px;top:438.58px;font-size:12.3px;line-height:12.3px;font-weight:normal;color:#dcdcdc;transform:scaleX(1.1308);">024</span>
<span style="left:942.50px;top:438.58px;font-size:12.3px;line-height:12.3px;font-weight:normal;color:#dcdcdc;transform:scaleX(1.0287);">2AF</span>
<span style="left:561.30px;top:452.97px;font-size:12.3px;line-height:12.3px;font-weight:normal;color:#ececec;transform:scaleX(1.3160);">20</span>
<span style="left:596.27px;top:452.97px;font-size:12.3px;line-height:12.3px;font-weight:normal;color:#dcdcdc;transform:scaleX(1.0603);">37E</span>
<span style="left:634.74px;top:452.97px;font-size:12.3px;line-height:12.3px;font-weight:normal;color:#dcdcdc;transform:scaleX(1.1308);">177</span>
<span style="left:673.21px;top:452.97px;font-size:12.3px;line-height:12.3px;font-weight:normal;color:#dcdcdc;transform:scaleX(1.0949);">3F2</span>
<span style="left:711.68px;top:452.97px;font-size:12.3px;line-height:12.3px;font-weight:normal;color:#dcdcdc;transform:scaleX(1.0603);">1A8</span>
<span style="left:750.15px;top:452.97px;font-size:12.3px;line-height:12.3px;font-weight:normal;color:#dcdcdc;transform:scaleX(1.0949);">08F</span>
<span style="left:788.62px;top:452.97px;font-size:12.3px;line-height:12.3px;font-weight:normal;color:#dcdcdc;transform:scaleX(1.1308);">354</span>
<span style="left:827.09px;top:452.97px;font-size:12.3px;line-height:12.3px;font-weight:normal;color:#dcdcdc;transform:scaleX(1.1308);">036</span>
<span style="left:865.56px;top:452.97px;font-size:12.3px;line-height:12.3px;font-weight:normal;color:#dcdcdc;transform:scaleX(1.0603);">3E2</span>
<span style="left:904.03px;top:452.97px;font-size:12.3px;line-height:12.3px;font-weight:normal;color:#dcdcdc;">3DF</span>
<span style="left:942.50px;top:452.97px;font-size:12.3px;line-height:12.3px;font-weight:normal;color:#dcdcdc;transform:scaleX(1.0284);">02D</span>
<span style="left:561.30px;top:467.36px;font-size:12.3px;line-height:12.3px;font-weight:normal;color:#ececec;transform:scaleX(1.3160);">30</span>
<span style="left:596.27px;top:467.36px;font-size:12.3px;line-height:12.3px;font-weight:normal;color:#dcdcdc;">0BE</span>
<span style="left:634.74px;top:467.36px;font-size:12.3px;line-height:12.3px;font-weight:normal;color:#dcdcdc;transform:scaleX(1.1308);">371</span>
<span style="left:673.21px;top:467.36px;font-size:12.3px;line-height:12.3px;font-weight:normal;color:#dcdcdc;transform:scaleX(1.0603);">08A</span>
<span style="left:711.68px;top:467.36px;font-size:12.3px;line-height:12.3px;font-weight:normal;color:#dcdcdc;transform:scaleX(1.0284);">3D6</span>
<span style="left:750.15px;top:467.36px;font-size:12.3px;line-height:12.3px;font-weight:normal;color:#dcdcdc;transform:scaleX(1.1308);">316</span>
<span style="left:788.62px;top:467.36px;font-size:12.3px;line-height:12.3px;font-weight:normal;color:#dcdcdc;transform:scaleX(1.0603);">3B1</span>
<span style="left:827.09px;top:467.36px;font-size:12.3px;line-height:12.3px;font-weight:normal;color:#dcdcdc;transform:scaleX(0.9698);">1CB</span>
<span style="left:865.56px;top:467.36px;font-size:12.3px;line-height:12.3px;font-weight:normal;color:#dcdcdc;transform:scaleX(0.9698);">1AC</span>
<span style="left:904.03px;top:467.36px;font-size:12.3px;line-height:12.3px;font-weight:normal;color:#dcdcdc;transform:scaleX(1.1308);">163</span>
<span style="left:942.50px;top:467.36px;font-size:12.3px;line-height:12.3px;font-weight:normal;color:#dcdcdc;transform:scaleX(1.0284);">07C</span>
<span style="left:561.30px;top:481.75px;font-size:12.3px;line-height:12.3px;font-weight:normal;color:#ececec;transform:scaleX(1.3160);">40</span>
<span style="left:596.27px;top:481.75px;font-size:12.3px;line-height:12.3px;font-weight:normal;color:#dcdcdc;transform:scaleX(1.1308);">222</span>
<span style="left:634.74px;top:481.75px;font-size:12.3px;line-height:12.3px;font-weight:normal;color:#dcdcdc;transform:scaleX(1.0949);">1F1</span>
<span style="left:673.21px;top:481.75px;font-size:12.3px;line-height:12.3px;font-weight:normal;color:#dcdcdc;transform:scaleX(1.1308);">200</span>
<span style="left:711.68px;top:481.75px;font-size:12.3px;line-height:12.3px;font-weight:normal;color:#dcdcdc;transform:scaleX(1.0284);">2D1</span>
<span style="left:750.15px;top:481.75px;font-size:12.3px;line-height:12.3px;font-weight:normal;color:#dcdcdc;transform:scaleX(1.1834);">117</span>
<span style="left:788.62px;top:481.75px;font-size:12.3px;line-height:12.3px;font-weight:normal;color:#dcdcdc;transform:scaleX(1.0284);">0C7</span>
<span style="left:827.09px;top:481.75px;font-size:12.3px;line-height:12.3px;font-weight:normal;color:#dcdcdc;transform:scaleX(1.1308);">094</span>
<span style="left:865.56px;top:481.75px;font-size:12.3px;line-height:12.3px;font-weight:normal;color:#dcdcdc;transform:scaleX(1.1065);">11B</span>
<span style="left:904.03px;top:481.75px;font-size:12.3px;line-height:12.3px;font-weight:normal;color:#dcdcdc;transform:scaleX(1.1308);">098</span>
<span style="left:942.50px;top:481.75px;font-size:12.3px;line-height:12.3px;font-weight:normal;color:#dcdcdc;transform:scaleX(1.0603);">0B9</span>
<span style="left:561.30px;top:496.14px;font-size:12.3px;line-height:12.3px;font-weight:normal;color:#ececec;transform:scaleX(1.3160);">50</span>
<span style="left:596.27px;top:496.14px;font-size:12.3px;line-height:12.3px;font-weight:normal;color:#dcdcdc;transform:scaleX(1.0603);">3B5</span>
<span style="left:634.74px;top:496.14px;font-size:12.3px;line-height:12.3px;font-weight:normal;color:#dcdcdc;">0AB</span>
<span style="left:673.21px;top:496.14px;font-size:12.3px;line-height:12.3px;font-weight:normal;color:#dcdcdc;transform:scaleX(1.1308);">184</span>
<span style="left:711.68px;top:496.14px;font-size:12.3px;line-height:12.3px;font-weight:normal;color:#dcdcdc;transform:scaleX(1.1308);">308</span>
<span style="left:750.15px;top:496.14px;font-size:12.3px;line-height:12.3px;font-weight:normal;color:#dcdcdc;transform:scaleX(1.0949);">06F</span>
<span style="left:788.62px;top:496.14px;font-size:12.3px;line-height:12.3px;font-weight:normal;color:#dcdcdc;transform:scaleX(1.1308);">245</span>
<span style="left:827.09px;top:496.14px;font-size:12.3px;line-height:12.3px;font-weight:normal;color:#dcdcdc;transform:scaleX(1.1308);">158</span>
<span style="left:865.56px;top:496.14px;font-size:12.3px;line-height:12.3px;font-weight:normal;color:#dcdcdc;transform:scaleX(1.0949);">01F</span>
<span style="left:904.03px;top:496.14px;font-size:12.3px;line-height:12.3px;font-weight:normal;color:#dcdcdc;transform:scaleX(1.0603);">19A</span>
<span style="left:942.50px;top:496.14px;font-size:12.3px;line-height:12.3px;font-weight:normal;color:#dcdcdc;transform:scaleX(1.0284);">0C4</span>
<span style="left:561.30px;top:510.53px;font-size:12.3px;line-height:12.3px;font-weight:normal;color:#ececec;transform:scaleX(1.3160);">60</span>
<span style="left:596.27px;top:510.53px;font-size:12.3px;line-height:12.3px;font-weight:normal;color:#dcdcdc;transform:scaleX(1.0603);">0E1</span>
<span style="left:634.74px;top:510.53px;font-size:12.3px;line-height:12.3px;font-weight:normal;color:#dcdcdc;transform:scaleX(1.1308);">212</span>
<span style="left:673.21px;top:510.53px;font-size:12.3px;line-height:12.3px;font-weight:normal;color:#dcdcdc;transform:scaleX(1.1308);">224</span>
<span style="left:711.68px;top:510.53px;font-size:12.3px;line-height:12.3px;font-weight:normal;color:#dcdcdc;transform:scaleX(1.0603);">1B6</span>
<span style="left:750.15px;top:510.53px;font-size:12.3px;line-height:12.3px;font-weight:normal;color:#dcdcdc;transform:scaleX(1.1308);">229</span>
<span style="left:788.62px;top:510.53px;font-size:12.3px;line-height:12.3px;font-weight:normal;color:#dcdcdc;transform:scaleX(0.9698);">0DA</span>
<span style="left:827.09px;top:510.53px;font-size:12.3px;line-height:12.3px;font-weight:normal;color:#dcdcdc;transform:scaleX(1.0284);">20C</span>
<span style="left:865.56px;top:510.53px;font-size:12.3px;line-height:12.3px;font-weight:normal;color:#dcdcdc;transform:scaleX(1.0284);">19C</span>
<span style="left:904.03px;top:510.53px;font-size:12.3px;line-height:12.3px;font-weight:normal;color:#dcdcdc;transform:scaleX(1.1308);">138</span>
<span style="left:942.50px;top:510.53px;font-size:12.3px;line-height:12.3px;font-weight:normal;color:#dcdcdc;transform:scaleX(1.0284);">3C8</span>
<span style="left:561.30px;top:524.92px;font-size:12.3px;line-height:12.3px;font-weight:normal;color:#ececec;transform:scaleX(1.3160);">70</span>
<span style="left:596.27px;top:524.92px;font-size:12.3px;line-height:12.3px;font-weight:normal;color:#dcdcdc;transform:scaleX(1.0603);">3A6</span>
<span style="left:634.74px;top:524.92px;font-size:12.3px;line-height:12.3px;font-weight:normal;color:#dcdcdc;transform:scaleX(1.0284);">03D</span>
<span style="left:673.21px;top:524.92px;font-size:12.3px;line-height:12.3px;font-weight:normal;color:#dcdcdc;transform:scaleX(1.0284);">12D</span>
<span style="left:711.68px;top:524.92px;font-size:12.3px;line-height:12.3px;font-weight:normal;color:#dcdcdc;transform:scaleX(1.0284);">0D1</span>
<span style="left:750.15px;top:524.92px;font-size:12.3px;line-height:12.3px;font-weight:normal;color:#dcdcdc;transform:scaleX(1.1308);">324</span>
<span style="left:788.62px;top:524.92px;font-size:12.3px;line-height:12.3px;font-weight:normal;color:#dcdcdc;transform:scaleX(1.1308);">190</span>
<span style="left:827.09px;top:524.92px;font-size:12.3px;line-height:12.3px;font-weight:normal;color:#dcdcdc;transform:scaleX(1.0284);">27C</span>
<span style="left:865.56px;top:524.92px;font-size:12.3px;line-height:12.3px;font-weight:normal;color:#dcdcdc;transform:scaleX(1.0603);">0E7</span>
<span style="left:904.03px;top:524.92px;font-size:12.3px;line-height:12.3px;font-weight:normal;color:#dcdcdc;transform:scaleX(1.0603);">0A6</span>
<span style="left:942.50px;top:524.92px;font-size:12.3px;line-height:12.3px;font-weight:normal;color:#dcdcdc;transform:scaleX(1.0949);">10F</span>
<span style="left:561.30px;top:539.31px;font-size:12.3px;line-height:12.3px;font-weight:normal;color:#ececec;transform:scaleX(1.3160);">80</span>
<span style="left:596.27px;top:539.31px;font-size:12.3px;line-height:12.3px;font-weight:normal;color:#dcdcdc;transform:scaleX(1.0284);">02D</span>
<span style="left:634.74px;top:539.31px;font-size:12.3px;line-height:12.3px;font-weight:normal;color:#dcdcdc;transform:scaleX(1.1308);">331</span>
<span style="left:673.21px;top:539.31px;font-size:12.3px;line-height:12.3px;font-weight:normal;color:#dcdcdc;transform:scaleX(1.1308);">373</span>
<span style="left:711.68px;top:539.31px;font-size:12.3px;line-height:12.3px;font-weight:normal;color:#dcdcdc;transform:scaleX(1.0287);">1FE</span>
<span style="left:750.15px;top:539.31px;font-size:12.3px;line-height:12.3px;font-weight:normal;color:#dcdcdc;transform:scaleX(1.0284);">3D7</span>
<span style="left:788.62px;top:539.31px;font-size:12.3px;line-height:12.3px;font-weight:normal;color:#dcdcdc;transform:scaleX(1.0949);">2F5</span>
<span style="left:827.09px;top:539.31px;font-size:12.3px;line-height:12.3px;font-weight:normal;color:#dcdcdc;transform:scaleX(1.0603);">3B9</span>
<span style="left:865.56px;top:539.31px;font-size:12.3px;line-height:12.3px;font-weight:normal;color:#dcdcdc;transform:scaleX(1.0949);">3F9</span>
<span style="left:904.03px;top:539.31px;font-size:12.3px;line-height:12.3px;font-weight:normal;color:#dcdcdc;">2AB</span>
<span style="left:942.50px;top:539.31px;font-size:12.3px;line-height:12.3px;font-weight:normal;color:#dcdcdc;transform:scaleX(1.1308);">081</span>
<span style="left:561.30px;top:553.70px;font-size:12.3px;line-height:12.3px;font-weight:normal;color:#ececec;transform:scaleX(1.3160);">90</span>
<span style="left:596.27px;top:553.70px;font-size:12.3px;line-height:12.3px;font-weight:normal;color:#dcdcdc;transform:scaleX(1.0284);">25D</span>
<span style="left:634.74px;top:553.70px;font-size:12.3px;line-height:12.3px;font-weight:normal;color:#dcdcdc;transform:scaleX(1.0603);">31A</span>
<span style="left:673.21px;top:553.70px;font-size:12.3px;line-height:12.3px;font-weight:normal;color:#dcdcdc;transform:scaleX(1.0603);">0B8</span>
<span style="left:711.68px;top:553.70px;font-size:12.3px;line-height:12.3px;font-weight:normal;color:#dcdcdc;transform:scaleX(1.0603);">1E4</span>
<span style="left:750.15px;top:553.70px;font-size:12.3px;line-height:12.3px;font-weight:normal;color:#dcdcdc;transform:scaleX(1.0603);">3A1</span>
<span style="left:788.62px;top:553.70px;font-size:12.3px;line-height:12.3px;font-weight:normal;color:#dcdcdc;transform:scaleX(1.1308);">251</span>
<span style="left:827.09px;top:553.70px;font-size:12.3px;line-height:12.3px;font-weight:normal;color:#dcdcdc;transform:scaleX(1.0603);">20E</span>
<span style="left:865.56px;top:553.70px;font-size:12.3px;line-height:12.3px;font-weight:normal;color:#dcdcdc;transform:scaleX(1.1308);">095</span>
<span style="left:904.03px;top:553.70px;font-size:12.3px;line-height:12.3px;font-weight:normal;color:#dcdcdc;transform:scaleX(1.1308);">139</span>
<span style="left:956.03px;top:554.80px;font-size:11px;line-height:11px;font-weight:normal;color:#a0a0a0;">...</span>
<span style="left:1011.34px;top:20.93px;font-size:11.3px;line-height:11.3px;font-weight:normal;color:#f0f0f0;letter-spacing:0.7px;text-shadow:0.2px 0 0 currentColor;">Ref Level</span>
<span style="left:1011.34px;top:66.43px;font-size:11.3px;line-height:11.3px;font-weight:normal;color:#f0f0f0;letter-spacing:0.7px;text-shadow:0.2px 0 0 currentColor;">Ref Level</span>
<span style="left:1021.28px;top:80.93px;font-size:11.3px;line-height:11.3px;font-weight:normal;color:#f0f0f0;letter-spacing:0.7px;text-shadow:0.2px 0 0 currentColor;">Offset</span>
<span style="left:1013.26px;top:119.73px;font-size:11.3px;line-height:11.3px;font-weight:normal;color:#f0f0f0;letter-spacing:0.7px;text-shadow:0.2px 0 0 currentColor;">RF Atten</span>
<span style="left:1017.72px;top:134.23px;font-size:11.3px;line-height:11.3px;font-weight:normal;color:#f0f0f0;letter-spacing:0.7px;text-shadow:0.2px 0 0 currentColor;">Manual</span>
<span style="left:1013.26px;top:172.68px;font-size:11.3px;line-height:11.3px;font-weight:normal;color:#f0f0f0;letter-spacing:0.7px;text-shadow:0.2px 0 0 currentColor;">RF Atten</span>
<span style="left:1025.33px;top:187.18px;font-size:11.3px;line-height:11.3px;font-weight:normal;color:#f0f0f0;letter-spacing:0.7px;text-shadow:0.2px 0 0 currentColor;">Auto</span>
<span style="left:1007.53px;top:277.88px;font-size:11.3px;line-height:11.3px;font-weight:normal;color:#f0f0f0;letter-spacing:0.7px;text-shadow:0.2px 0 0 currentColor;">Auto Scale</span>
<span style="left:1016.16px;top:292.38px;font-size:11.3px;line-height:11.3px;font-weight:normal;color:#f0f0f0;letter-spacing:0.7px;text-shadow:0.2px 0 0 currentColor;">Window</span>
<span style="left:1033.41px;top:331.18px;font-size:11.3px;line-height:11.3px;font-weight:normal;color:#f0f0f0;letter-spacing:0.7px;text-shadow:0.2px 0 0 currentColor;">Unit</span>
<span style="left:1026.42px;top:345.68px;font-size:11.3px;line-height:11.3px;font-weight:normal;color:#f0f0f0;letter-spacing:0.7px;text-shadow:0.2px 0 0 currentColor;">Config</span>
<span style="left:1028.97px;top:383.98px;font-size:11.3px;line-height:11.3px;font-weight:normal;color:#f0f0f0;letter-spacing:0.7px;text-shadow:0.2px 0 0 currentColor;">Scale</span>
<span style="left:1026.42px;top:398.48px;font-size:11.3px;line-height:11.3px;font-weight:normal;color:#f0f0f0;letter-spacing:0.7px;text-shadow:0.2px 0 0 currentColor;">Config</span>
<span style="left:1016.58px;top:436.93px;font-size:11.3px;line-height:11.3px;font-weight:normal;color:#f0f0f0;letter-spacing:0.7px;text-shadow:0.2px 0 0 currentColor;">Amplitude</span>
<span style="left:1026.42px;top:451.43px;font-size:11.3px;line-height:11.3px;font-weight:normal;color:#f0f0f0;letter-spacing:0.7px;text-shadow:0.2px 0 0 currentColor;">Config</span>
<span style="left:1012.14px;top:547.73px;font-size:11.3px;line-height:11.3px;font-weight:normal;color:#f0f0f0;letter-spacing:0.75px;text-shadow:0.2px 0 0 currentColor;">Overview</span>
</div>
</body></html>
